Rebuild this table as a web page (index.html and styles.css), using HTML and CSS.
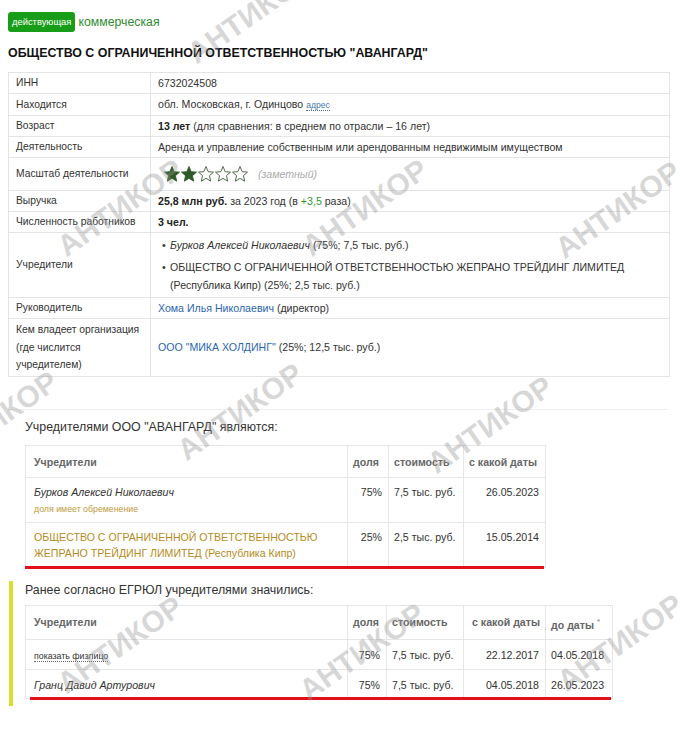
FILE: index.html
```html
<!DOCTYPE html>
<html lang="ru">
<head>
    <meta charset="UTF-8">
    <meta name="viewport" content="width=device-width, initial-scale=1.0">
    <title>ООО "АВАНГАРД"</title>
    <link rel="stylesheet" href="styles.css">
</head>
<body>
<div class="page">
    <div class="status">
        <span class="badge">действующая</span>
        <span class="kind">коммерческая</span>
    </div>
    <h1 class="company-name">ОБЩЕСТВО С ОГРАНИЧЕННОЙ ОТВЕТСТВЕННОСТЬЮ "АВАНГАРД"</h1>

    <table class="info-table">
        <tr><td class="label">ИНН</td><td>6732024508</td></tr>
        <tr><td class="label">Находится</td><td>обл. Московская, г. Одинцово <span class="addr">адрес</span></td></tr>
        <tr><td class="label">Возраст</td><td><b>13 лет</b> (для сравнения: в среднем по отрасли – 16 лет)</td></tr>
        <tr><td class="label">Деятельность</td><td>Аренда и управление собственным или арендованным недвижимым имуществом</td></tr>
        <tr>
            <td class="label">Масштаб деятельности</td>
            <td class="rating">
                <span class="stars">
                    <svg class="star full" viewBox="0 0 24 24"><path d="M12 2l2.9 6.9 7.1.6-5.4 4.7 1.6 7.3L12 17.8 5.8 21.5l1.6-7.3L2 9.5l7.1-.6z"/></svg>
                    <svg class="star full" viewBox="0 0 24 24"><path d="M12 2l2.9 6.9 7.1.6-5.4 4.7 1.6 7.3L12 17.8 5.8 21.5l1.6-7.3L2 9.5l7.1-.6z"/></svg>
                    <svg class="star" viewBox="0 0 24 24"><path d="M12 2l2.9 6.9 7.1.6-5.4 4.7 1.6 7.3L12 17.8 5.8 21.5l1.6-7.3L2 9.5l7.1-.6z"/></svg>
                    <svg class="star" viewBox="0 0 24 24"><path d="M12 2l2.9 6.9 7.1.6-5.4 4.7 1.6 7.3L12 17.8 5.8 21.5l1.6-7.3L2 9.5l7.1-.6z"/></svg>
                    <svg class="star" viewBox="0 0 24 24"><path d="M12 2l2.9 6.9 7.1.6-5.4 4.7 1.6 7.3L12 17.8 5.8 21.5l1.6-7.3L2 9.5l7.1-.6z"/></svg>
                </span>
                <span class="scale-note">(заметный)</span>
            </td>
        </tr>
        <tr><td class="label">Выручка</td><td><b>25,8 млн руб.</b> за 2023 год (в <span class="up">+3,5</span> раза)</td></tr>
        <tr><td class="label">Численность работников</td><td><b>3 чел.</b></td></tr>
        <tr>
            <td class="label">Учредители</td>
            <td>
                <ul class="owners">
                    <li><i>Бурков Алексей Николаевич</i> (75%; 7,5 тыс. руб.)</li>
                    <li>ОБЩЕСТВО С ОГРАНИЧЕННОЙ ОТВЕТСТВЕННОСТЬЮ ЖЕПРАНО ТРЕЙДИНГ ЛИМИТЕД (Республика Кипр) (25%; 2,5 тыс. руб.)</li>
                </ul>
            </td>
        </tr>
        <tr><td class="label">Руководитель</td><td><a href="#">Хома Илья Николаевич</a> (директор)</td></tr>
        <tr><td class="label tall"><span class="nowrap">Кем владеет организация</span><br>(где числится<br>учредителем)</td><td><a href="#">ООО "МИКА ХОЛДИНГ"</a> (25%; 12,5 тыс. руб.)</td></tr>
    </table>

    <hr class="divider">

    <section class="founders">
        <h3>Учредителями ООО "АВАНГАРД" являются:</h3>
        <div class="marked">
            <table class="founders-table current">
                <colgroup>
                    <col class="c-name"><col class="c-share"><col class="c-cost"><col class="c-from">
                </colgroup>
                <tr><th>Учредители</th><th>доля</th><th>стоимость</th><th>с какой даты</th></tr>
                <tr>
                    <td><i>Бурков Алексей Николаевич</i><span class="note">доля имеет обременение</span></td>
                    <td class="num">75%</td><td>7,5 тыс. руб.</td><td class="num">26.05.2023</td>
                </tr>
                <tr>
                    <td class="foreign">ОБЩЕСТВО С ОГРАНИЧЕННОЙ ОТВЕТСТВЕННОСТЬЮ ЖЕПРАНО ТРЕЙДИНГ ЛИМИТЕД (Республика Кипр)</td>
                    <td class="num">25%</td><td>2,5 тыс. руб.</td><td class="num">15.05.2014</td>
                </tr>
            </table>
        </div>
    </section>

    <section class="founders history">
        <h3>Ранее согласно ЕГРЮЛ учредителями значились:</h3>
        <div class="marked">
            <table class="founders-table past">
                <colgroup>
                    <col class="c-name"><col class="c-share2"><col class="c-cost2"><col class="c-from"><col class="c-to">
                </colgroup>
                <tr><th>Учредители</th><th>доля</th><th>стоимость</th><th class="num">с какой даты</th><th>до даты <sup>*</sup></th></tr>
                <tr class="short">
                    <td><span class="show-person">показать физлицо</span></td>
                    <td class="num">75%</td><td>7,5 тыс. руб.</td><td class="num">22.12.2017</td><td>04.05.2018</td>
                </tr>
                <tr class="short">
                    <td><i>Гранц Давид Артурович</i></td>
                    <td class="num">75%</td><td>7,5 тыс. руб.</td><td class="num">04.05.2018</td><td>26.05.2023</td>
                </tr>
            </table>
        </div>
    </section>

    <div class="watermarks">
        <span class="wm wm-a">АНТИКОР</span>
        <span class="wm wm-b1">АНТИКОР</span>
        <span class="wm wm-b2">АНТИКОР</span>
        <span class="wm wm-b3">АНТИКОР</span>
        <span class="wm wm-c1">АНТИКОР</span>
        <span class="wm wm-c2">АНТИКОР</span>
        <span class="wm wm-c3">АНТИКОР</span>
        <span class="wm wm-d1">АНТИКОР</span>
        <span class="wm wm-d2">АНТИКОР</span>
        <span class="wm wm-d3">АНТИКОР</span>
    </div>
</div>
</body>
</html>
```

FILE: styles.css
```css
body {
    margin: 0;
    font-family: "Liberation Sans", Arial, sans-serif;
    color: #333;
    background: #fff;
}
.page {
    position: relative;
    height: 745px;
    box-sizing: border-box;
    padding: 12px 10px 0 8px;
    overflow: hidden;
}

/* status line */
.status {
    display: flex;
    align-items: center;
    gap: 3px;
    height: 20px;
}
.badge {
    background: #179d17;
    color: #fff;
    font-size: 9.4px;
    line-height: 20px;
    padding: 0 4px;
    border-radius: 3px;
}
.kind {
    color: #2f8d2f;
    font-size: 12.3px;
}
.company-name {
    font-size: 12.4px;
    line-height: 18px;
    font-weight: bold;
    color: #111;
    margin: 12px 0 10px;
}

/* main info table */
.info-table {
    width: 662px;
    border-collapse: collapse;
    table-layout: fixed;
    font-size: 10.6px;
}
.info-table td {
    border: 1px solid #e4e4e4;
    padding: 2px 7px;
    line-height: 16px;
    vertical-align: middle;
}
.info-table td.label {
    width: 142px;
    box-sizing: border-box;
    padding-right: 0;
    font-size: 10.3px;
}
.info-table td.tall {
    line-height: 17.5px;
}
.nowrap {
    white-space: nowrap;
}
.info-table b {
    color: #222;
}
.info-table a {
    color: #2c66b0;
    text-decoration: none;
}
.addr {
    font-size: 8.6px;
    color: #4a78b0;
    border-bottom: 1px dotted #4a78b0;
}
.up {
    color: #2e9a2e;
}
.info-table td.rating {
    padding: 7px 7px;
}
.stars {
    display: inline-flex;
    vertical-align: middle;
    margin-left: 5px;
}
.star {
    width: 18px;
    height: 18px;
    margin-right: -1px;
    fill: #fff;
    stroke: #3d5a38;
    stroke-width: 1.2;
}
.star.full {
    fill: #2e5a29;
    stroke: #2e5a29;
}
.scale-note {
    font-style: italic;
    color: #aaa;
    margin-left: 7px;
    vertical-align: middle;
}
.owners {
    list-style: none;
    margin: 1px 0;
    padding: 0;
    line-height: 18px;
}
.owners li {
    position: relative;
    padding-left: 12px;
}
.owners li + li {
    margin-top: 4px;
}
.owners li::before {
    content: "•";
    position: absolute;
    left: 4px;
}

.divider {
    border: 0;
    border-top: 1px solid #eee;
    margin: 32px 2px 0 0;
}

/* founders */
.founders {
    padding-left: 17px;
}
.founders h3 {
    font-size: 12.4px;
    line-height: 18px;
    font-weight: normal;
    color: #333;
    margin: 8px 0 9px;
}
.marked {
    position: relative;
    display: inline-block;
}
.marked::after {
    content: "";
    position: absolute;
    left: 0;
    right: 2px;
    bottom: -1px;
    height: 3px;
    background: #e3101c;
}
.founders-table {
    border-collapse: collapse;
    table-layout: fixed;
    font-size: 10.6px;
}
.founders-table.current {
    width: 520px;
}
.founders-table.past {
    width: 587px;
}
.c-name { width: 322px; }
.c-share { width: 41px; }
.c-cost { width: 75px; }
.c-from { width: 82px; }
.c-share2 { width: 39px; }
.c-cost2 { width: 77px; }
.c-to { width: 67px; }
.founders-table th,
.founders-table td {
    border: 1px solid #e6e6e6;
    padding: 6px 5px;
    line-height: 16px;
    text-align: left;
    vertical-align: top;
    white-space: nowrap;
}
.founders-table th:first-child,
.founders-table td:first-child {
    padding-left: 8px;
    white-space: normal;
}
.founders-table td.num {
    padding-right: 6px;
}
.founders-table th {
    color: #666;
    font-weight: bold;
    padding-top: 8px;
    padding-bottom: 7px;
}
.founders-table .num {
    text-align: right;
}
.founders-table tr.short td {
    padding-top: 7px;
    padding-bottom: 5px;
}
.founders-table i {
    color: #333;
}
.note {
    display: block;
    margin-top: 2px;
    font-size: 8.8px;
    line-height: 14px;
    color: #c09a3c;
}
.foreign {
    color: #b58b22;
}
.show-person {
    font-size: 8.8px;
    color: #333;
    border-bottom: 1px dotted #666;
}
sup {
    font-size: 8px;
    color: #999;
}

.history {
    margin: 9px 0 0 1px;
    padding: 0 0 3px 12px;
    border-left: 4px solid #d7e02c;
}
.history h3 {
    margin: 0 0 6px;
}
.history .marked::after {
    left: 5px;
}

/* watermarks */
.watermarks {
    position: absolute;
    inset: 0;
    pointer-events: none;
}
.wm {
    position: absolute;
    width: 150px;
    line-height: 34px;
    text-align: center;
    font-size: 30px;
    font-weight: bold;
    color: rgba(150, 150, 150, 0.38);
    white-space: nowrap;
    transform: rotate(-35deg);
}
.wm-a { left: 175px; top: -2px; }
.wm-b1 { left: 45px; top: 191px; }
.wm-b2 { left: 290px; top: 191px; }
.wm-b3 { left: 543px; top: 193px; }
.wm-c1 { left: -80px; top: 403px; }
.wm-c2 { left: 165px; top: 395px; }
.wm-c3 { left: 415px; top: 408px; }
.wm-d1 { left: 45px; top: 628px; }
.wm-d2 { left: 287px; top: 635px; }
.wm-d3 { left: 545px; top: 626px; }
```
